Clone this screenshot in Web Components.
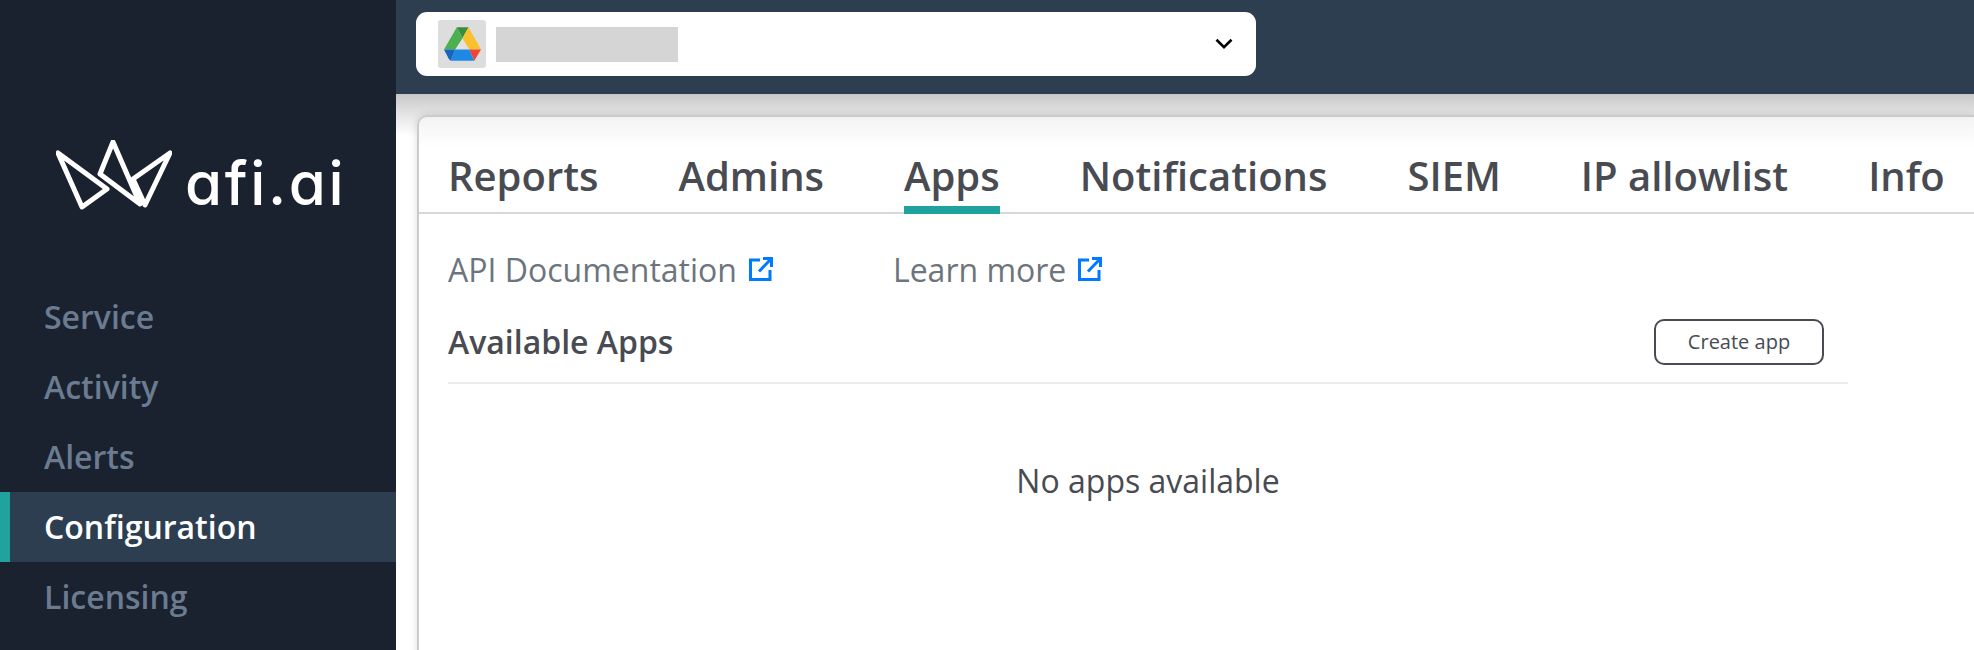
<!DOCTYPE html>
<html>
<head>
<meta charset="utf-8">
<title>afi.ai</title>
<style>
  html, body { margin: 0; height: 100%; overflow: hidden; }
  body { font-family: "Open Sans", sans-serif; background: #fff; }
</style>
</head>
<body>
<afi-shell>
  <afi-sidebar slot="sidebar">
    <afi-nav-item>Service</afi-nav-item>
    <afi-nav-item>Activity</afi-nav-item>
    <afi-nav-item>Alerts</afi-nav-item>
    <afi-nav-item active>Configuration</afi-nav-item>
    <afi-nav-item>Licensing</afi-nav-item>
  </afi-sidebar>
  <afi-topbar slot="topbar"></afi-topbar>
  <afi-card slot="content">
    <afi-tabs active="Apps" items="Reports,Admins,Apps,Notifications,SIEM,IP allowlist,Info"></afi-tabs>
    <afi-apps-panel></afi-apps-panel>
  </afi-card>
</afi-shell>

<script>
class AfiShell extends HTMLElement {
  constructor() {
    super();
    this.attachShadow({ mode: 'open' });
    this.shadowRoot.innerHTML = `
      <style>
        :host { display: grid; grid-template-columns: 396px 1fr; height: 650px; overflow: hidden; }
        #main { display: flex; flex-direction: column; min-width: 0; }
        #content {
          flex: 1;
          padding: 21px 0 0 21px;
          overflow: hidden;
          background: linear-gradient(#c8c8c8, #e4e4e4 20px, #fff 42px);
        }
      </style>
      <slot name="sidebar"></slot>
      <div id="main">
        <slot name="topbar"></slot>
        <div id="content"><slot name="content"></slot></div>
      </div>
    `;
  }
}

class AfiSidebar extends HTMLElement {
  constructor() {
    super();
    this.attachShadow({ mode: 'open' });
    this.shadowRoot.innerHTML = `
      <style>
        :host { display: flex; flex-direction: column; background: #1a212f; }
        #logo { display: flex; align-items: flex-end; height: 282px; box-sizing: border-box; padding: 0 0 69px 56px; gap: 13px; }
        #logo svg { display: block; margin-bottom: 3px; }
        #name {
          font-family: Inter, "Liberation Sans", sans-serif;
          font-feature-settings: "cv11";
          font-size: 60px;
          font-weight: 500;
          line-height: 60px;
          letter-spacing: 2.6px;
          color: #fff;
        }
      </style>
      <div id="logo">
        <svg width="116" height="70" viewBox="56 140 116 70" fill="none" stroke="#fff" stroke-width="5" stroke-linejoin="round">
          <path d="M58 153 82 207 107 189Z"/>
          <path d="M113 142 140 204 100 174Z"/>
          <path d="M170 153 145 205 133 179Z"/>
        </svg>
        <span id="name">afi.ai</span>
      </div>
      <slot></slot>
    `;
  }
}

class AfiNavItem extends HTMLElement {
  constructor() {
    super();
    this.attachShadow({ mode: 'open' });
    this.shadowRoot.innerHTML = `
      <style>
        :host {
          display: flex;
          align-items: center;
          height: 70px;
          box-sizing: border-box;
          padding: 0 0 2px 44px;
          font-size: 32px;
          font-weight: 600;
          color: #6b7b90;
        }
        :host([active]) {
          background: #2c3e50;
          color: #fff;
          padding-left: 34px;
          border-left: 10px solid #20a39e;
        }
      </style>
      <slot></slot>
    `;
  }
}

class AfiTopbar extends HTMLElement {
  constructor() {
    super();
    this.attachShadow({ mode: 'open' });
    this.shadowRoot.innerHTML = `
      <style>
        :host { display: block; height: 94px; box-sizing: border-box; padding: 12px 0 0 20px; background: #2c3e50; }
        #select {
          display: flex;
          align-items: center;
          width: 840px;
          height: 64px;
          box-sizing: border-box;
          padding: 0 22px;
          background: #fff;
          border-radius: 11px;
        }
        #tile { display: flex; align-items: center; justify-content: center; width: 48px; height: 48px; background: #ddd; border-radius: 3px; }
        #blank { width: 182px; height: 35px; margin-left: 10px; background: #d5d5d5; }
        #chevron { margin-left: auto; margin-right: 1px; }
        svg { display: block; }
      </style>
      <div id="select">
        <div id="tile">
          <svg width="37" height="34" viewBox="130 82 110 100">
            <path fill="#e2e2e2" d="M185 115 205 148H163Z"/>
            <path fill="#388e3c" d="M168 82H203L185 115Z"/>
            <path fill="#4caf50" d="M168 82 185 115 163 148H130Z"/>
            <path fill="#fbc02d" d="M203 82 240 148H205L185 115Z"/>
            <path fill="#f44336" d="M205 148H240L220 182Z"/>
            <path fill="#1e88e5" d="M163 148H205L220 182H150Z"/>
            <path fill="#1565c0" d="M130 148H163L150 182 144 176Z"/>
          </svg>
        </div>
        <div id="blank"></div>
        <svg id="chevron" width="18" height="12" viewBox="0 0 18 12" fill="none" stroke="#000" stroke-width="2.600">
          <path d="M1.500 1.800 9 9.200 16.500 1.800"/>
        </svg>
      </div>
    `;
  }
}

class AfiCard extends HTMLElement {
  constructor() {
    super();
    this.attachShadow({ mode: 'open' });
    this.shadowRoot.innerHTML = `
      <style>
        :host {
          display: block;
          height: 560px;
          box-sizing: border-box;
          padding-left: 29px;
          background: linear-gradient(#f3f3f3, #fff 30px);
          border: 2px solid #cbcbcb;
          border-right: 0;
          border-bottom: 0;
          border-top-left-radius: 10px;
          box-shadow: 0 0 8px rgba(0, 0, 0, .14);
        }
      </style>
      <slot></slot>
    `;
  }
}

class AfiTabs extends HTMLElement {
  constructor() {
    super();
    this.attachShadow({ mode: 'open' });
    const active = this.getAttribute('active');
    const tabs = this.getAttribute('items').split(',')
      .map(name => `<div class="tab${name === active ? ' on' : ''}">${name}</div>`)
      .join('');
    this.shadowRoot.innerHTML = `
      <style>
        :host {
          display: flex;
          gap: 80px;
          height: 97px;
          box-sizing: border-box;
          margin-left: -29px;
          padding-left: 29px;
          border-bottom: 2px solid #d8d8d8;
          font-size: 40px;
          font-weight: 600;
          color: #484b52;
          white-space: nowrap;
        }
        .tab { height: 97px; box-sizing: border-box; padding-top: 32px; line-height: 54px; }
        .on { border-bottom: 8px solid #20a39e; }
      </style>
      ${tabs}
    `;
  }
}

class AfiLink extends HTMLElement {
  constructor() {
    super();
    this.attachShadow({ mode: 'open' });
    this.shadowRoot.innerHTML = `
      <style>
        :host { display: inline-flex; align-items: center; gap: 12px; height: 44px; font-size: 32px; color: #6c757d; }
        svg { display: block; }
      </style>
      <slot></slot>
      <svg width="24" height="24" viewBox="0 0 24 24" fill="none" stroke="#007bff" stroke-width="3">
        <path d="M11 3H1.500V22.500H21V13"/>
        <path d="M10 14.500 21.500 2.500M14 1.500H22.500V10"/>
      </svg>
    `;
  }
}

class AfiAppsPanel extends HTMLElement {
  constructor() {
    super();
    this.attachShadow({ mode: 'open' });
    this.shadowRoot.innerHTML = `
      <style>
        :host { display: block; width: 1400px; }
        #links { display: flex; gap: 120px; height: 87px; padding-top: 33px; box-sizing: border-box; }
        #head {
          display: flex;
          align-items: center;
          justify-content: space-between;
          height: 83px;
          box-sizing: border-box;
          padding: 0 24px 0 0;
          border-bottom: 2px solid #e9ecef;
        }
        h2 { margin: 0; font-size: 32px; font-weight: 600; color: #484b52; }
        button {
          width: 170px;
          height: 46px;
          padding: 0;
          font: 400 20px "Open Sans", sans-serif;
          color: #484b52;
          background: #fff;
          border: 2px solid #484b52;
          border-radius: 10px;
        }
        #empty { padding-top: 75px; text-align: center; font-size: 32px; line-height: 44px; color: #484b52; }
      </style>
      <div id="links">
        <afi-link>API Documentation</afi-link>
        <afi-link>Learn more</afi-link>
      </div>
      <div id="head">
        <h2>Available Apps</h2>
        <button>Create app</button>
      </div>
      <div id="empty">No apps available</div>
    `;
  }
}

customElements.define('afi-shell', AfiShell);
customElements.define('afi-sidebar', AfiSidebar);
customElements.define('afi-nav-item', AfiNavItem);
customElements.define('afi-topbar', AfiTopbar);
customElements.define('afi-card', AfiCard);
customElements.define('afi-tabs', AfiTabs);
customElements.define('afi-link', AfiLink);
customElements.define('afi-apps-panel', AfiAppsPanel);
</script>
</body>
</html>
